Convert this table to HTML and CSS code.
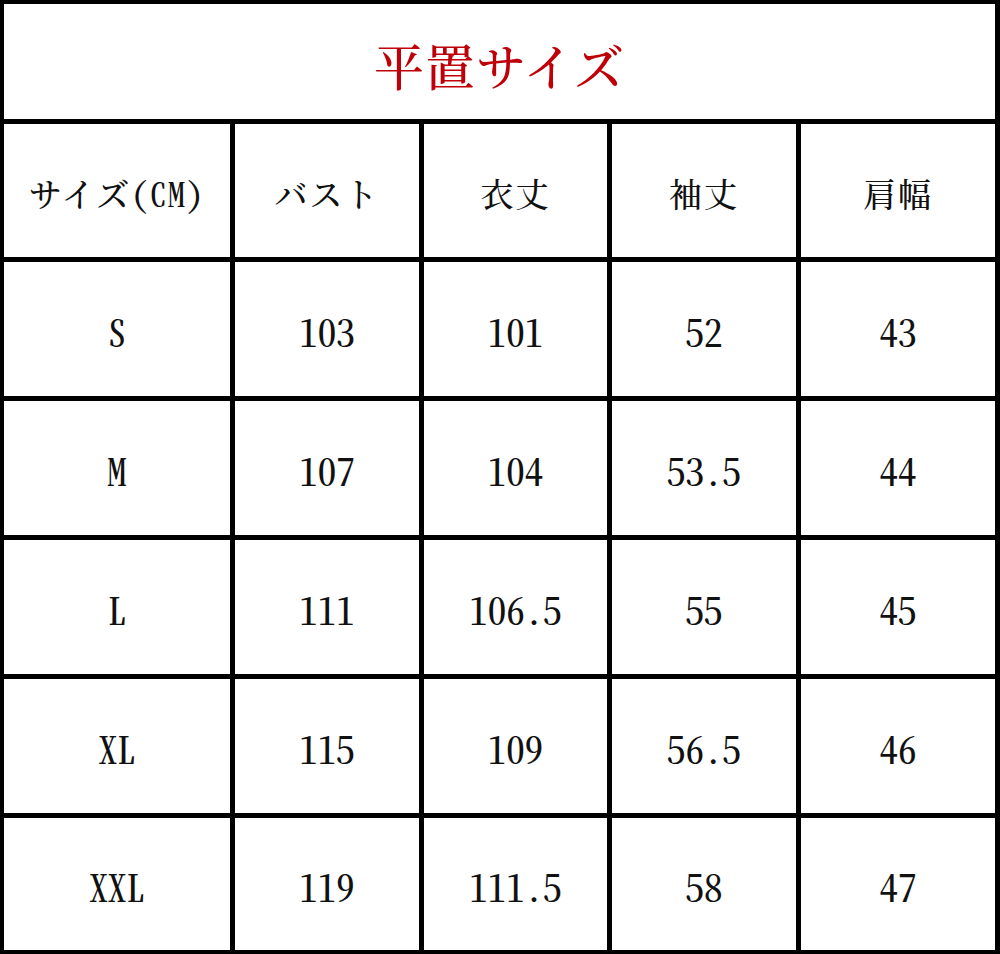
FILE: index.html
```html
<!DOCTYPE html>
<html lang="ja">
<head>
<meta charset="utf-8">
<title>平置サイズ</title>
<link rel="stylesheet" href="styles.css">
</head>
<body>
<div class="table">
  <div class="cell title">平置サイズ</div>

  <div class="cell head">サイズ(CM)</div>
  <div class="cell head">バスト</div>
  <div class="cell head">衣丈</div>
  <div class="cell head">袖丈</div>
  <div class="cell head">肩幅</div>

  <div class="cell">S</div>
  <div class="cell">103</div>
  <div class="cell">101</div>
  <div class="cell">52</div>
  <div class="cell">43</div>

  <div class="cell">M</div>
  <div class="cell">107</div>
  <div class="cell">104</div>
  <div class="cell">53.5</div>
  <div class="cell">44</div>

  <div class="cell">L</div>
  <div class="cell">111</div>
  <div class="cell">106.5</div>
  <div class="cell">55</div>
  <div class="cell">45</div>

  <div class="cell">XL</div>
  <div class="cell">115</div>
  <div class="cell">109</div>
  <div class="cell">56.5</div>
  <div class="cell">46</div>

  <div class="cell">XXL</div>
  <div class="cell">119</div>
  <div class="cell">111.5</div>
  <div class="cell">58</div>
  <div class="cell">47</div>
</div>
</body>
</html>
```

FILE: styles.css
```css
html, body {
  margin: 0;
  padding: 0;
  background: #ffffff;
}

.table {
  box-sizing: border-box;
  width: 1000px;
  height: 954px;
  background: #000000;
  padding: 4px 5px 4px 4px;
  display: grid;
  grid-template-columns: 226px 184px 183px 184px 194px;
  grid-template-rows: 115px 133px 134px 134px 134px 134px 132px;
  gap: 5px;
  font-family: "Noto Serif CJK JP", "Liberation Serif", "Noto Sans CJK JP", serif;
  font-feature-settings: "hwid" 1;
  color: #111111;
}

.cell {
  background: #ffffff;
  display: flex;
  align-items: center;
  justify-content: center;
  font-size: 37px;
  font-weight: 500;
  line-height: 1;
  white-space: nowrap;
  padding-top: 4px;
}

.title {
  grid-column: 1 / -1;
  font-size: 50px;
  color: #c00008;
  letter-spacing: 1px;
}

.head {
  font-size: 33px;
  letter-spacing: 2px;
}
```
